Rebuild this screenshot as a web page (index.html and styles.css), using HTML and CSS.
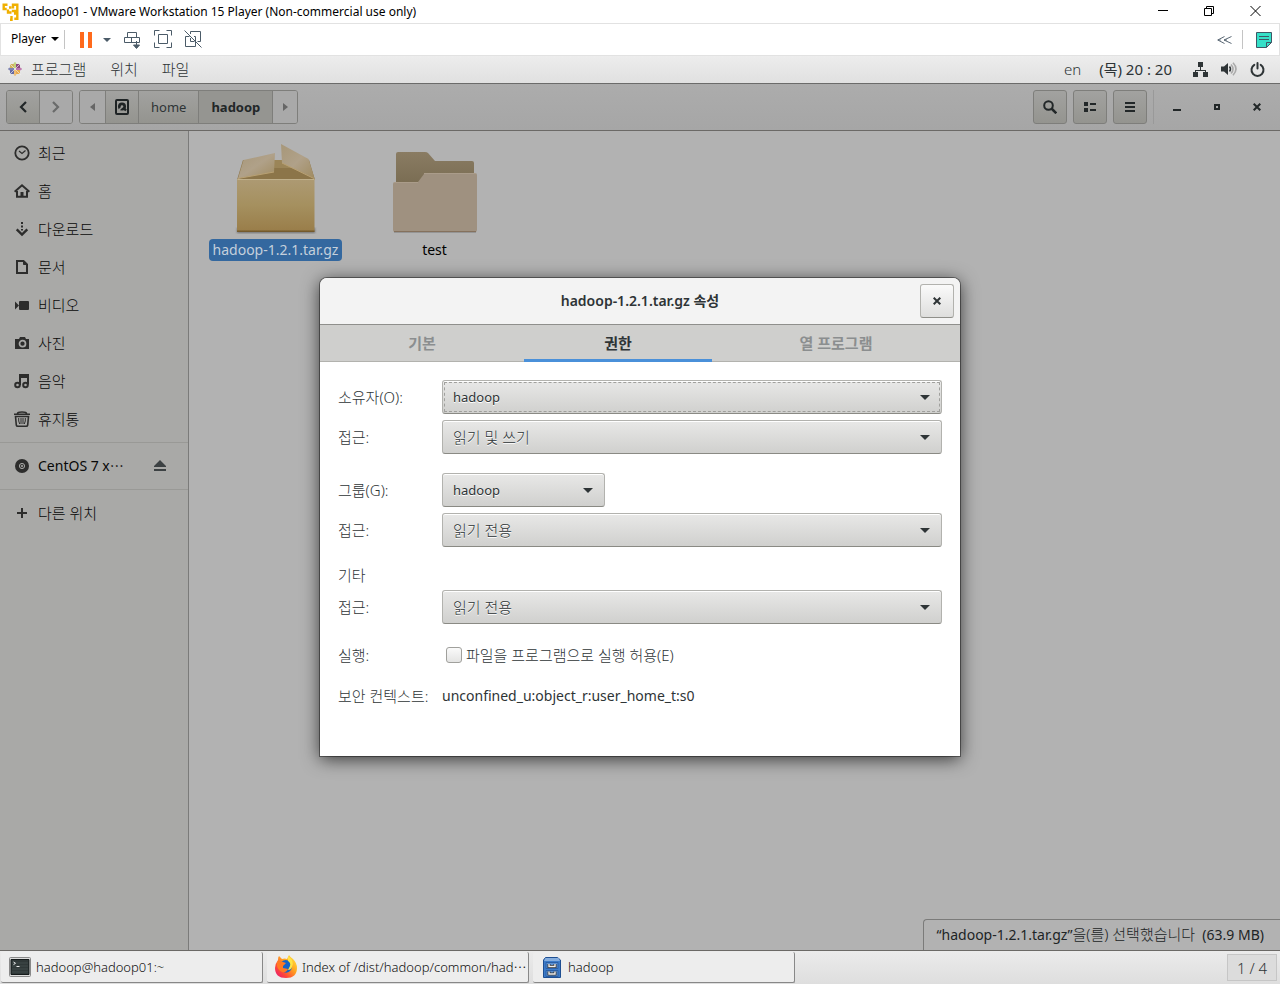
FILE: index.html
```html
<!DOCTYPE html>
<html lang="ko">
<head>
<meta charset="utf-8">
<title>hadoop01 - VMware Workstation 15 Player</title>
<link rel="stylesheet" href="styles.css">
</head>
<body>
<header class="titlebar">
  <svg class="vm-logo" width="17" height="18" viewBox="0 0 17 18" fill="none" stroke="#f0b000" stroke-width="2.400"><path d="M5.500 1.800H1.700V6h3M7 4.500h2.500M11 5.500V1.800h4.300V8h-5.500M6 6.500v3h3.500M12 10.500h3.300v5.300h-3M9.500 13v3.800H8"/></svg>
  <h1 class="titlebar-text">hadoop01 - VMware Workstation 15 Player (Non-commercial use only)</h1>
  <div class="win-controls">
    <button aria-label="Minimize"><svg width="11" height="11" stroke="#000" fill="none"><path d="M0 4.500h10"/></svg></button>
    <button aria-label="Restore"><svg width="11" height="11" stroke="#000" fill="none"><path d="M.5 2.500h7v7H.5zM2.500 2.500v-2h7v7H7.500"/></svg></button>
    <button aria-label="Close"><svg width="11" height="11" stroke="#000" fill="none"><path d="M.5 0l10 10M10.500 0l-10 10"/></svg></button>
  </div>
</header>

<div class="vm-toolbar">
  <button class="player-menu">Player <svg width="8" height="4"><path d="M0 0h8L4 4z"/></svg></button>
  <span class="vm-divider"></span>
  <button class="vm-pause" aria-label="Pause"><svg width="12" height="16" fill="#ff6a1c"><path d="M0 0h4v16H0zM8 0h4v16H8z"/></svg></button>
  <button class="vm-drop" aria-label="Power options"><svg width="8" height="4" fill="#4b5b68"><path d="M0 0h8L4 4z"/></svg></button>
  <button class="vm-tool" aria-label="Send Ctrl+Alt+Del"><svg width="18" height="18" fill="none" stroke="#4b5b68"><path d="M3.500 6.500v-5h9v5M.5 6.500h15v5H.5zM7.500 6.500v5M12.500 10v6"/><path d="M9.500 14h6l-3 3.500z" fill="#4b5b68"/></svg></button>
  <button class="vm-tool" aria-label="Full screen"><svg width="19" height="19" fill="none" stroke="#4b5b68"><path d="M.5 5.500v-5h5M12.500.5h5v5M17.500 12.500v5h-5M5.500 17.500h-5v-5M4.500 4.500h9v9h-9z"/></svg></button>
  <button class="vm-tool" aria-label="Unity"><svg width="19" height="19" fill="none" stroke="#4b5b68"><path d="M6.500 4V1.500h10v10h-3M10 6.500h1.500v10h-10v-10h4M.5.5l17 17M6.500 8v3.500h4"/></svg></button>
  <div class="vm-right">
    <button aria-label="Collapse"><svg width="15" height="8" fill="none" stroke="#5a6875"><path d="M7.500 .5L.8 4l6.700 3.500M14.500.5L7 4l7.500 3.500M.8 4h3M7 4h3"/></svg></button>
    <span class="vm-divider"></span>
    <button aria-label="Notes"><svg width="16" height="16" fill="#35e0c8" stroke="#3d5866"><path d="M.5.5h15v10l-5 5H.5z"/><path d="M15.500 10.500h-5v5M3 4.500h10M3 7.500h10" fill="none"/></svg></button>
  </div>
</div>

<nav class="top-panel">
  <button class="panel-item"><svg width="14" height="14" viewBox="0 0 14 14"><path d="M4 4L7 0l3 4-3 3z" fill="#a9c23f"/><path d="M10 4l4 3-4 3-3-3z" fill="#a5368a"/><path d="M10 10l-3 4-3-4 3-3z" fill="#f0a332"/><path d="M4 10L0 7l4-3 3 3z" fill="#3f4793"/><path d="M2 2h4v4H2z" fill="#d3b25c"/><path d="M8 2h4v4H8z" fill="#8d477f"/><path d="M8 8h4v4H8z" fill="#e8aa4d"/><path d="M2 8h4v4H2z" fill="#656aa4"/><path d="M1 1l12 12M13 1L1 13M7 1v12M1 7h12" stroke="#eee" stroke-width=".7"/></svg>프로그램</button>
  <button class="panel-item">위치</button>
  <button class="panel-item">파일</button>
  <div class="panel-status">
    <button>en</button>
    <button class="clock">(목) 20 : 20</button>
    <button class="tray" aria-label="System">
      <svg width="15" height="15" fill="#2e3436"><path d="M5 0h5v5H5zM0 10h5v5H0zM10 10h5v5h-5zM7 5h1v3h5v2h-1V9H3v1H2V8h5z"/></svg>
      <svg width="16" height="14" fill="none"><path d="M0 4.500h3L7 1v12L3 9.500H0z" fill="#2e3436"/><path d="M8.500 4.500q2 2.500 0 5" stroke="#2e3436" stroke-width="1.500"/><path d="M10 2.500q4 4.500 0 9M12 .8q6 6.200 0 12.400" stroke="#aaa" stroke-width="1.600"/></svg>
      <svg width="15" height="15" fill="none" stroke="#2e3436" stroke-width="2" stroke-linecap="round"><path d="M4.300 2.800a6 6 0 1 0 6.400 0M7.500 1v5.500"/></svg>
    </button>
  </div>
</nav>

<main class="files">
  <div class="files-header">
    <div class="btn-group">
      <button class="hbtn" aria-label="Back"><svg width="8" height="12" fill="none" stroke="#222728" stroke-width="2.200"><path d="M7 1L2 6l5 5"/></svg></button>
      <button class="hbtn flat" aria-label="Forward"><svg width="8" height="12" fill="none" stroke="#6a6b6b" stroke-width="2.200"><path d="M1 1l5 5-5 5"/></svg></button>
    </div>
    <div class="btn-group path">
      <button class="hbtn flat edge" aria-label="Previous"><svg width="5" height="8" fill="#666"><path d="M5 0v8L0 4z"/></svg></button>
      <button class="hbtn root" aria-label="Root"><svg width="14" height="16" fill="none" stroke="#1f2425" stroke-width="2"><rect x="1" y="1" width="12" height="14" rx="1"/><circle cx="7" cy="7.500" r="4" fill="#1f2425" stroke="none"/><path d="M7 7.500l4 4" stroke-width="2.400"/><path d="M4 11l3-3" stroke="#9b9b98" stroke-width="1.600"/><circle cx="7" cy="7.500" r="1.300" fill="#9b9b98" stroke="none"/></svg></button>
      <button class="hbtn crumb">home</button>
      <button class="hbtn crumb current">hadoop</button>
      <button class="hbtn flat edge" aria-label="Next"><svg width="5" height="8" fill="#666"><path d="M0 0v8l5-4z"/></svg></button>
    </div>
    <div class="header-actions">
      <button class="hbtn square" aria-label="Search"><svg width="14" height="14" fill="none" stroke="#222728" stroke-width="2"><circle cx="5.500" cy="5.500" r="4.300"/><path d="M8.500 8.500l4.800 4.800" stroke-width="2.500"/></svg></button>
      <button class="hbtn square" aria-label="List view"><svg width="12" height="10" fill="#222728"><path d="M0 0h4v4H0zM0 6h4v4H0zM6 1h6v2H6zM6 7h6v2H6z"/></svg></button>
      <button class="hbtn square" aria-label="Menu"><svg width="10" height="10" fill="#222728"><path d="M0 0h10v2H0zM0 4h10v2H0zM0 8h10v2H0z"/></svg></button>
    </div>
    <div class="files-controls">
      <button aria-label="Minimize"><svg width="8" height="8" fill="#222728"><path d="M0 6h8v2H0z"/></svg></button>
      <button aria-label="Maximize"><svg width="6" height="6" fill="none" stroke="#222728" stroke-width="2"><path d="M1 1h4v4H1z"/></svg></button>
      <button aria-label="Close"><svg width="8" height="8" stroke="#222728" stroke-width="2"><path d="M.7.7l6.600 6.600M7.300.7L.7 7.300"/></svg></button>
    </div>
  </div>

  <div class="files-body">
    <nav class="sidebar">
      <a href="#recent"><svg width="16" height="16" fill="none" stroke="#2d2d2c" stroke-width="1.800"><circle cx="8" cy="8" r="6.700"/><path d="M5 6l3 2.500 3.500-3" stroke-width="1.200"/></svg>최근</a>
      <a href="#home"><svg width="16" height="16" fill="none" stroke="#2d2d2c" stroke-width="2"><path d="M.6 8.700L8 2.300l7.400 6.400M3 8v5.800h10V8"/><path d="M8 9v5" stroke-width="3"/></svg>홈</a>
      <a href="#downloads"><svg width="16" height="16" fill="none" stroke="#2d2d2c" stroke-width="2"><path d="M8 1v2M8 4.500v2M8 8v1.500" /><path d="M2.700 8.300L8 13.500l5.300-5.200" stroke-width="2.400"/></svg>다운로드</a>
      <a href="#documents"><svg width="16" height="16" fill="none" stroke="#2d2d2c" stroke-width="2"><path d="M3 2h6.500L13 5.500V14H3z"/><path d="M9.500 2v3.500H13z" fill="#2d2d2c" stroke-width="1"/></svg>문서</a>
      <a href="#videos"><svg width="16" height="16" fill="#2d2d2c"><rect x="5" y="4" width="10" height="9" rx="1"/><path d="M1 4.500v8l4-4z"/></svg>비디오</a>
      <a href="#pictures"><svg width="16" height="16" fill="#2d2d2c"><path d="M2 4h3l1-2h5l1 2h3v10H1V4z"/><circle cx="8.500" cy="8.700" r="3" fill="none" stroke="#a9a9a7" stroke-width="1.700"/></svg>사진</a>
      <a href="#music"><svg width="16" height="16" fill="none" stroke="#2d2d2c" stroke-width="2"><path d="M6 12V2h8v9.500M6 4h8"/><circle cx="3.500" cy="12" r="2.300"/><circle cx="11.500" cy="12" r="2.300"/></svg>음악</a>
      <a href="#trash"><svg width="16" height="16" fill="none" stroke="#2d2d2c" stroke-width="1.600"><path d="M0 3.200h16M3.500 2.500q0-1.500 4.500-1.500t4.500 1.500M1.500 5.500h13L13.700 14q-.2 1.200-1.500 1.200H3.800Q2.500 15.200 2.300 14z"/><path d="M4.700 7q-.5 3 1 6M7 7v6M9 7v6M11.300 7q.5 3-1 6" stroke-width="1"/></svg>휴지통</a>
      <hr>
      <div class="mount"><a href="#centos"><svg width="16" height="16" fill="none" stroke="#a9a9a7"><circle cx="8" cy="8" r="7" fill="#2d2d2c" stroke="none"/><circle cx="8" cy="8" r="2.600"/><circle cx="8" cy="8" r=".8"/></svg>CentOS 7 x⋯</a><button aria-label="Eject"><svg width="12" height="12" fill="#3c4143"><path d="M6 0l6 6v1H0V6zM0 9h12v2H0z"/></svg></button></div>
      <hr>
      <a href="#other"><svg width="16" height="16" fill="none" stroke="#2d2d2c" stroke-width="2"><path d="M8 3v10M3 8h10"/></svg>다른 위치</a>
    </nav>

    <section class="icon-view">
      <a class="file selected" href="#archive">
        <svg width="84" height="96" viewBox="0 0 84 96">
          <defs>
            <linearGradient id="box" x1="0" y1="0" x2="0" y2="1"><stop offset="0" stop-color="#ad9a73"/><stop offset=".5" stop-color="#a5905f"/><stop offset="1" stop-color="#997d49"/></linearGradient>
            <linearGradient id="flap" x1="0" y1="0" x2="1" y2="1"><stop offset="0" stop-color="#a79779"/><stop offset=".5" stop-color="#b0a189"/><stop offset="1" stop-color="#a08b60"/></linearGradient>
            <filter id="blur"><feGaussianBlur stdDeviation="1.200"/></filter>
          </defs>
          <path d="M3 88h78v5H3z" fill="#444" opacity=".6" filter="url(#blur)"/>
          <path d="M9 20h66l6 20H3z" fill="#8c7549"/><path d="M38 20h34v8H38z" fill="#9b8558"/>
          <path d="M3 39h77.500v52.500H3z" fill="url(#box)"/>
          <path d="M3 90.500h77.500v1.500H3z" fill="#745a2d"/><path d="M3.500 39.500h77" stroke="#c0b08b"/>
          <path d="M9.500 20L41 13l-1 19L4 38.500z" fill="url(#flap)"/>
          <path d="M47 4l27.500 15 6 19.500L48 23z" fill="url(#flap)"/>
          <path d="M4 38.500L40 32M48 23l32 15.500" stroke="#b9a173" fill="none"/>
          <path d="M41 13h6v7h-6z" fill="#b2b2b2"/>
        </svg>
        <span>hadoop-1.2.1.tar.gz</span>
      </a>
      <a class="file" href="#test">
        <svg width="84" height="96" viewBox="0 0 84 96">
          <defs><linearGradient id="back" x1="0" y1="0" x2="0" y2="1"><stop offset="0" stop-color="#8a7c63"/><stop offset="1" stop-color="#786b51"/></linearGradient></defs>
          <path d="M1 91h82v2H1z" fill="#777" opacity=".5"/>
          <path d="M3 14q0-2 2-2h27q2 0 3 1l7 8h37q2 0 2 2v24H3z" fill="url(#back)"/>
          <path d="M0 44q0-2 2-2h23l6-8q1-1 3-1h48q2 0 2 2v55q0 2-2 2H2q-2 0-2-2z" fill="#9f9180"/>
          <path d="M1 91.500h82" stroke="#85715d"/><path d="M1 42.500h24M31 33.500h52" stroke="#aa9c8a"/>
        </svg>
        <span>test</span>
      </a>
      <p class="selection-status">“hadoop-1.2.1.tar.gz”<span>을(를) 선택했습니다</span>&nbsp; (63.9 MB)</p>
    </section>
  </div>

  <div class="dialog-layer">
    <section class="dialog" role="dialog" aria-labelledby="dialog-title">
      <header class="dialog-header">
        <h2 id="dialog-title">hadoop-1.2.1.tar.gz 속성</h2>
        <button class="dialog-close" aria-label="Close"><svg width="8" height="8" stroke="#2e3436" stroke-width="2"><path d="M.7.7l6.600 6.600M7.300.7L.7 7.300"/></svg></button>
      </header>
      <div class="tabs" role="tablist">
        <button role="tab" aria-selected="false">기본</button>
        <button role="tab" aria-selected="true">권한</button>
        <button role="tab" aria-selected="false">열 프로그램</button>
      </div>
      <form class="permissions">
        <div class="group">
          <label for="owner">소유자(O):</label>
          <div class="combo latin focused"><select id="owner"><option>hadoop</option></select></div>
          <label for="owner-access">접근:</label>
          <div class="combo"><select id="owner-access"><option>읽기 및 쓰기</option></select></div>
        </div>
        <div class="group">
          <label for="grp">그룹(G):</label>
          <div class="combo latin short"><select id="grp"><option>hadoop</option></select></div>
          <label for="grp-access">접근:</label>
          <div class="combo"><select id="grp-access"><option>읽기 전용</option></select></div>
        </div>
        <div class="group">
          <span class="group-title">기타</span>
          <label for="other-access">접근:</label>
          <div class="combo"><select id="other-access"><option>읽기 전용</option></select></div>
        </div>
        <div class="group">
          <span>실행:</span>
          <label class="check"><input type="checkbox">파일을 프로그램으로 실행 허용(E)</label>
        </div>
        <div class="group">
          <span>보안 컨텍스트:</span>
          <span class="context">unconfined_u:object_r:user_home_t:s0</span>
        </div>
      </form>
    </section>
  </div>
</main>

<footer class="taskbar">
  <button class="task"><svg width="22" height="20"><rect x=".5" y=".5" width="21" height="19" rx="1" fill="#ddd" stroke="#888"/><path d="M2 2.500h18v15H2z" fill="#303838" stroke="#151a1a"/><path d="M3 6h16M3 9h16M3 12h16M3 15h16" stroke="#414b4a"/><path d="M4.500 5l2 1.300-2 1.300M7.500 9.500h3" stroke="#eee" fill="none"/></svg><span>hadoop@hadoop01:~</span></button>
  <button class="task"><svg width="22" height="24" viewBox="0 0 22 24"><defs><linearGradient id="fox" x1="1" y1="0" x2="0" y2="1"><stop offset="0" stop-color="#fff04a"/><stop offset=".4" stop-color="#ffa41f"/><stop offset=".7" stop-color="#ff4a37"/><stop offset="1" stop-color="#e2107f"/></linearGradient></defs><path d="M3 5q0-3 1-4l3 3q3-1 5 0l2-4q1 2 4 4 4 4 4 9 0 10-11 10T0 13q0-4 3-8z" fill="url(#fox)"/><path d="M6 7q5-4 9 0 3 4 1 8-4 5-9 1l-1-3 2-3z" fill="#1464c8"/><path d="M13 1q7 5 4 11-1 3-4 3l2-4q1-3-2-5z" fill="#ffe343"/><path d="M2 7q3-2 6 0l3 1-3 3v2l5 1q-2 4-6 3-4-2-5-6z" fill="#ff7a23"/></svg><span>Index of /dist/hadoop/common/had⋯</span></button>
  <button class="task"><svg width="22" height="22"><path d="M2.500 4l2-2.500h12L19.500 4v17.500h-17V4z" fill="#3d7cc9" stroke="#1f4f92"/><path d="M4.500 2h13L19 5H3z" fill="#86aede"/><path d="M5 6.500h12v6H5zM5 14.500h12v6H5z" fill="#5b90d2" stroke="#2a5fa6"/><path d="M8 8v2.500h6V8M8 15.500V18h6v-2.500" stroke="#333" stroke-width="3" fill="none"/><path d="M8 8v2.500h6V8M8 15.500V18h6v-2.500" stroke="#eee" fill="none" stroke-width="1.400"/></svg><span>hadoop</span></button>
  <button class="workspace">1 / 4</button>
</footer>
</body>
</html>
```

FILE: styles.css
```css
* { box-sizing: border-box; }

body {
  margin: 0;
  min-height: 100vh;
  display: flex;
  flex-direction: column;
  font: 14px/20px "Noto Sans", "Noto Sans CJK KR", sans-serif;
  color: #2e3436;
  background: #fff;
}

button, select, input { font: inherit; color: inherit; }
button { border: 0; padding: 0; background: none; display: flex; align-items: center; justify-content: center; }
a { color: inherit; text-decoration: none; }
svg { display: block; flex: none; }
h1, h2, p { margin: 0; }

/* VMware window */
.titlebar { height: 23px; display: flex; align-items: center; padding-left: 2px; gap: 4px; color: #000; }
.titlebar-text { font-size: 12px; font-weight: 400; }
.win-controls { margin-left: auto; display: flex; padding-right: 2px; }
.win-controls button { width: 46px; height: 22px; }

.vm-toolbar { height: 33px; display: flex; align-items: center; border: 1px solid #e2e2e2; padding: 0 7px 0 10px; }
.player-menu { font-size: 12px; gap: 5px; color: #000; padding-bottom: 2px; }
.vm-divider { width: 1px; height: 19px; margin: 0 8px; background: #c4c4c4; }
.player-menu + .vm-divider { margin-left: 5px; }
.vm-pause { margin-left: 7px; }
.vm-drop { margin: 0 13px 0 11px; }
.vm-tool { width: 19px; margin-right: 11px; }
.vm-right { margin-left: auto; display: flex; align-items: center; }
.vm-right .vm-divider { margin: 0 13px 0 10px; }

/* Guest desktop panel */
.top-panel { height: 28px; display: flex; align-items: center; padding: 0 15px 1px 8px; border-bottom: 1px solid #6b6b6a; background: linear-gradient(#ededed, #e0e0e0); font-size: 15px; font-weight: 300; }
.panel-item { gap: 9px; margin-right: 24px; }
.panel-status { margin-left: auto; display: flex; align-items: center; gap: 18px; }
.clock { font-weight: 400; white-space: pre; }
.tray { gap: 13px; margin-left: 3px; }

/* File manager */
.files { flex: 1; position: relative; display: flex; flex-direction: column; }
.files-header { height: 47px; display: flex; align-items: center; padding: 0 3px 0 6px; background: linear-gradient(#acacac, #a6a6a6); border-bottom: 1px solid #6b6966; }
.btn-group { display: flex; border: 1px solid #7e7e7b; border-radius: 3px; overflow: hidden; height: 34px; }
.hbtn { width: 32px; background: linear-gradient(#a2a2a0, #94948f); }
.hbtn + .hbtn { width: 33px; border-left: 1px solid #7e7e7b; }
.btn-group .flat { background: #a9a9a9; }
.path { margin-left: 6px; }
.path .edge, .path .hbtn + .edge { width: 25px; }
.path .hbtn.crumb { width: auto; padding: 0 12px; font-size: 13px; }
.path .current { background: #959591; font-weight: 700; color: #222728; }
.header-actions { margin-left: auto; display: flex; gap: 6px; padding-right: 6px; border-right: 1px solid #999; }
.header-actions .hbtn.square { width: 34px; height: 34px; border: 1px solid #7e7e7b; border-radius: 3px; }
.files-controls { display: flex; margin-left: 3px; }
.files-controls button { width: 40px; height: 34px; }

.files-body { flex: 1; display: flex; }
.sidebar { width: 189px; padding: 3px 0; background: #a9a9a7; border-right: 1px solid #7b7b7a; color: #080808; font-size: 15px; }
.sidebar a { height: 38px; display: flex; align-items: center; gap: 8px; padding-left: 14px; font-weight: 300; }
.sidebar hr { margin: 4px 0; border: 0; border-top: 1px solid #999996; }
.mount { display: flex; align-items: center; }
.sidebar .mount a { font-size: 14px; font-weight: 400; }
.mount button { margin-left: auto; margin-right: 22px; }

.icon-view { flex: 1; position: relative; display: flex; align-items: flex-start; padding: 9px 7px; background: #b2b2b2; color: #000; }
.file { width: 159px; display: flex; flex-direction: column; align-items: center; gap: 3px; }
.file span { padding: 1px 4px; border-radius: 4px; }
.selected span { background: #34689f; color: #c4d0dc; }
.selection-status { position: absolute; right: 0; bottom: 0; padding: 4px 16px 5px 13px; border: solid #7b7b7a; border-width: 1px 0 0 1px; border-top-left-radius: 4px; color: #202425; }
.selection-status span { font-size: 15px; font-weight: 300; }

/* Properties dialog */
.dialog-layer { position: absolute; inset: 0; display: flex; align-items: center; justify-content: center; }
.dialog { width: 50%; min-width: 520px; background: #fff; border-radius: 7px 7px 0 0; box-shadow: 0 0 0 1px rgba(0, 0, 0, .4), 0 3px 18px rgba(0, 0, 0, .7); overflow: hidden; }
.dialog-header { display: grid; grid-template-columns: 34px 1fr 34px; align-items: center; height: 47px; padding: 0 6px; background: #f3f3f3; border-bottom: 1px solid #8f8f8c; }
.dialog-header h2 { grid-column: 2; text-align: center; font-size: 14px; line-height: 20px; font-weight: 600; }
.dialog-close { height: 34px; border: 1px solid #b2b2ae; border-bottom-color: #8f8f8a; border-radius: 3px; background: linear-gradient(#fafafa, #dededd); }
.tabs { display: grid; grid-template-columns: 204fr 188fr 248fr; height: 37px; background: #cfcfcd; border-bottom: 1px solid #b2b2ae; }
.tabs button { font-size: 15px; font-weight: 700; color: #8b8e8f; }
.tabs [aria-selected="true"] { color: #2e3436; box-shadow: inset 0 -2px #4a90d9, 0 1px #4a90d9; }

.permissions { display: flex; flex-direction: column; gap: 19px; padding: 18px 18px 50px; }
.group { display: grid; grid-template-columns: 104px 1fr; align-items: center; row-gap: 6px; font-size: 15px; font-weight: 300; }
.group-title { grid-column: 1 / -1; line-height: 18px; }
.combo { position: relative; }
.latin { font-size: 13px; font-weight: 400; }
.context { font-size: 14px; font-weight: 400; }
.combo::after { content: ""; position: absolute; right: 12px; top: 15px; border: solid transparent; border-width: 5px 5px 0; border-top-color: #2e3436; pointer-events: none; }
.combo select { appearance: none; display: block; width: 100%; height: 34px; padding: 0 10px; border: 1px solid #b2b2ae; border-bottom-color: #8a8a84; border-radius: 3px; background: linear-gradient(#e8e8e7, #d0d0ce); text-shadow: 0 1px #fff; box-shadow: inset 0 1px #fff; }
.focused select { outline: 1px dashed #a0a09d; outline-offset: -3px; }
.short { width: 163px; }
.check { display: flex; align-items: center; gap: 4px; height: 24px; padding-left: 4px; }
.check input { appearance: none; width: 16px; height: 16px; margin: 0; border: 1px solid #a0a09c; border-radius: 3px; background: linear-gradient(#fafafa, #e4e4e3); }

/* Window list */
.taskbar { height: 34px; display: flex; align-items: center; gap: 4px; padding: 0 3px 0 1px; border-top: 1px solid #6b6966; background: linear-gradient(#ebebeb, #dedede); font-size: 13px; }
.task { width: 262px; height: 31px; gap: 5px; padding: 0 8px; justify-content: flex-start; background: #ededed; border: solid #888; border-width: 0 1px 1px 0; border-radius: 2px; font-weight: 300; color: #111; }
.task span { white-space: nowrap; }
.workspace { margin-left: auto; width: 50px; height: 27px; border: 1px solid #c6c6c6; background: #dcdcdc; font-size: 15px; font-weight: 300; }
```
